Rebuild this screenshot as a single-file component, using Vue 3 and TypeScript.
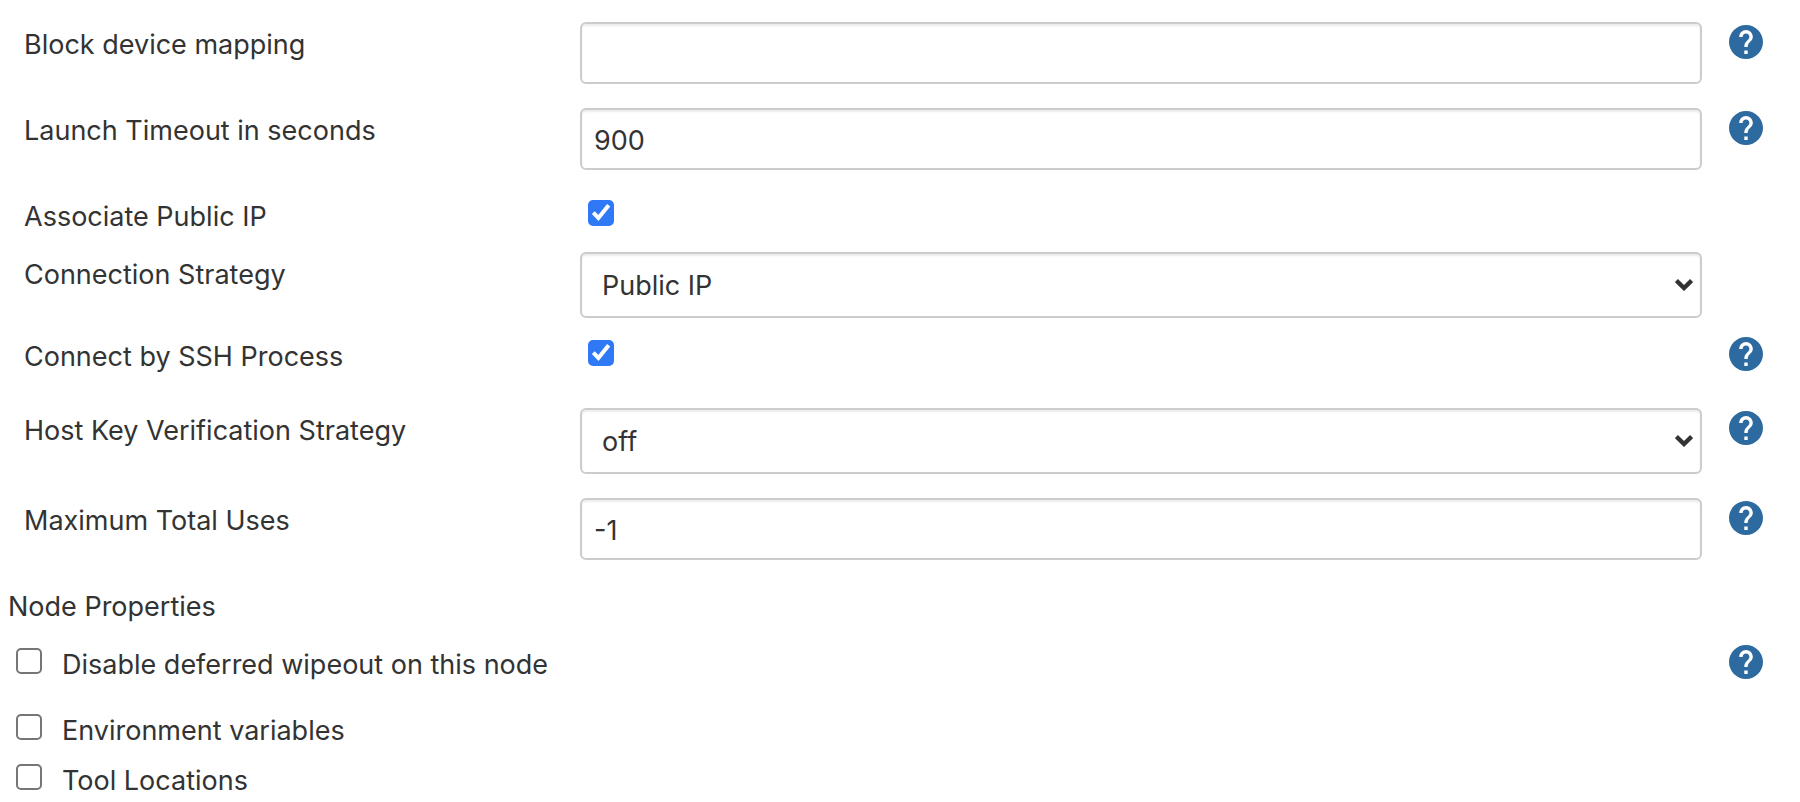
<script setup lang="ts">
import { reactive } from 'vue'

interface Field {
  id: string
  label: string
  kind: 'text' | 'select' | 'checkbox'
  help: boolean
  space: 'none' | 'small' | 'large'
  options?: string[]
}

const fields: Field[] = [
  { id: 'deviceMapping', label: 'Block device mapping', kind: 'text', help: true, space: 'large' },
  { id: 'launchTimeout', label: 'Launch Timeout in seconds', kind: 'text', help: true, space: 'large' },
  { id: 'publicIp', label: 'Associate Public IP', kind: 'checkbox', help: false, space: 'small' },
  {
    id: 'connectionStrategy',
    label: 'Connection Strategy',
    kind: 'select',
    help: false,
    space: 'small',
    options: ['Public IP', 'Public DNS', 'Private IP', 'Private DNS'],
  },
  { id: 'sshProcess', label: 'Connect by SSH Process', kind: 'checkbox', help: true, space: 'large' },
  {
    id: 'hostKeyStrategy',
    label: 'Host Key Verification Strategy',
    kind: 'select',
    help: true,
    space: 'large',
    options: ['off', 'accept-new', 'check-new-soft', 'check-new-hard'],
  },
  { id: 'maxUses', label: 'Maximum Total Uses', kind: 'text', help: true, space: 'large' },
]

const values = reactive<Record<string, string>>({
  deviceMapping: '',
  launchTimeout: '900',
  connectionStrategy: 'Public IP',
  hostKeyStrategy: 'off',
  maxUses: '-1',
})

const flags = reactive<Record<string, boolean>>({
  publicIp: true,
  sshProcess: true,
  wipeout: false,
  envVars: false,
  tools: false,
})

const nodeProperties = [
  { id: 'wipeout', label: 'Disable deferred wipeout on this node', help: true },
  { id: 'envVars', label: 'Environment variables', help: false },
  { id: 'tools', label: 'Tool Locations', help: false },
]

const tickPath = 'M5.3 12.7 10.4 18 20.7 5.3'
const helpPath =
  'M12 2C6.48 2 2 6.48 2 12s4.48 10 10 10 10-4.48 10-10S17.52 2 12 2zm1 17h-2v-2h2v2zm2.07-7.75l-.9.92C13.45 12.9 13 13.5 13 15h-2v-.5c0-1.1.45-2.1 1.17-2.83l1.24-1.26c.37-.36.59-.86.59-1.41 0-1.1-.9-2-2-2s-2 .9-2 2H8c0-2.21 1.79-4 4-4s4 1.79 4 4c0 .88-.36 1.68-.93 2.25z'
</script>

<template>
  <form class="config" @submit.prevent>
    <div v-for="field in fields" :key="field.id" class="row" :class="`space-${field.space}`">
      <label class="name" :for="field.id">{{ field.label }}</label>
      <div class="setting">
        <input
          v-if="field.kind === 'text'"
          :id="field.id"
          v-model="values[field.id]"
          class="control"
          type="text"
        />
        <div v-else-if="field.kind === 'select'" class="picker">
          <select :id="field.id" v-model="values[field.id]" class="control">
            <option v-for="option in field.options" :key="option" :value="option">{{ option }}</option>
          </select>
          <svg class="chevron" viewBox="0 0 18 12" aria-hidden="true">
            <path d="M1.4 1.6 9 9l7.6-7.4" fill="none" stroke="#333" stroke-width="4.4" />
          </svg>
        </div>
        <span v-else class="tick">
          <input :id="field.id" v-model="flags[field.id]" type="checkbox" />
          <svg class="mark" viewBox="0 0 26 26" aria-hidden="true">
            <path :d="tickPath" fill="none" stroke="#fff" stroke-width="4" />
          </svg>
        </span>
      </div>
      <button v-if="field.help" class="help" type="button" :aria-label="`Help for feature: ${field.label}`">
        <svg viewBox="2 2 20 20" aria-hidden="true"><path :d="helpPath" /></svg>
      </button>
    </div>

    <fieldset class="properties">
      <legend class="heading">Node Properties</legend>
      <div v-for="item in nodeProperties" :key="item.id" class="property" :class="{ tall: item.help }">
        <span class="tick">
          <input :id="item.id" v-model="flags[item.id]" type="checkbox" />
          <svg class="mark" viewBox="0 0 26 26" aria-hidden="true">
            <path :d="tickPath" fill="none" stroke="#fff" stroke-width="4" />
          </svg>
        </span>
        <label class="name" :for="item.id">{{ item.label }}</label>
        <button v-if="item.help" class="help" type="button" :aria-label="`Help for feature: ${item.label}`">
          <svg viewBox="2 2 20 20" aria-hidden="true"><path :d="helpPath" /></svg>
        </button>
      </div>
    </fieldset>
  </form>
</template>

<style>
body {
  background: #fff;
}
</style>

<style scoped>
.config {
  padding-top: 22px;
  color: #333;
  font-family: Inter, 'Liberation Sans', sans-serif;
  font-size: 27px;
  line-height: 36px;
}

.row {
  display: grid;
  grid-template-columns: 556px minmax(0, 1fr) 98px;
  align-items: start;
  padding-left: 24px;
}

.space-small {
  padding-bottom: 16px;
}

.space-large {
  padding-bottom: 24px;
}

.name {
  padding-top: 5px;
}

.setting {
  display: flex;
  min-height: 42px;
}

.space-large .setting {
  min-height: 50px;
}

.control {
  box-sizing: border-box;
  width: 100%;
  height: 62px;
  margin: 0;
  padding: 2px 12px 0;
  border: 2px solid #ccc;
  border-radius: 6px;
  background: #fff;
  box-shadow: inset 0 2px 2px rgba(0, 0, 0, 0.075);
  color: inherit;
  font: inherit;
}

.picker {
  position: relative;
  flex: 1;
}

select.control {
  display: block;
  height: 66px;
  padding: 2px 48px 0 20px;
  appearance: none;
}

.chevron {
  position: absolute;
  top: 27px;
  right: 9px;
  width: 18px;
  height: 12px;
  pointer-events: none;
}

.tick {
  position: relative;
  flex: none;
  width: 26px;
  height: 26px;
  margin: 6px 0 0 8px;
}

.tick input {
  display: block;
  box-sizing: border-box;
  width: 26px;
  height: 26px;
  margin: 0;
  border: 2px solid #767676;
  border-radius: 5px;
  background: #fff;
  appearance: none;
}

.tick input:checked {
  border-color: #2f79f7;
  background: #2f79f7;
}

.mark {
  position: absolute;
  inset: 0;
  visibility: hidden;
  pointer-events: none;
}

.tick input:checked + .mark {
  visibility: visible;
}

.help {
  justify-self: center;
  width: 34px;
  height: 34px;
  margin: 3px 10px 0 0;
  padding: 0;
  border: 0;
  border-radius: 50%;
  background: none;
  cursor: pointer;
}

.help svg {
  display: block;
  width: 34px;
  height: 34px;
  fill: #2d6a9f;
}

.properties {
  min-width: 0;
  margin: 0;
  padding: 0 0 0 8px;
  border: 0;
}

.heading {
  padding: 5px 0 17px;
}

.property {
  display: grid;
  grid-template-columns: 54px minmax(0, 1fr) 98px;
  align-items: start;
  min-height: 50px;
}

.property:last-child {
  min-height: 40px;
}

.property.tall {
  min-height: 66px;
}
</style>
